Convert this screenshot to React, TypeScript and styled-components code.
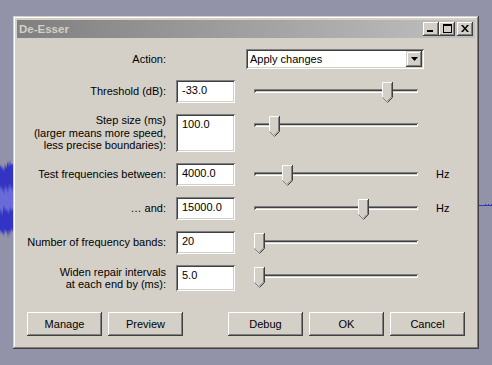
import styled, { createGlobalStyle } from "styled-components";

const GlobalStyle = createGlobalStyle`
  html, body {
    margin: 0;
    padding: 0;
    background: #9293a9;
  }
  body {
    font-family: "Liberation Sans", Arial, sans-serif;
    font-size: 11px;
    color: #000;
  }
`;

type Row = {
  label: string[];
  value: string;
  pos: number;
  height: number;
  unit?: string;
};

const rows: Row[] = [
  { label: ["Threshold (dB):"], value: "-33.0", pos: 128 / 153, height: 23 },
  {
    label: ["Step size (ms)", "(larger means more speed,", "less precise boundaries):"],
    value: "100.0",
    pos: 15 / 153,
    height: 38,
  },
  { label: ["Test frequencies between:"], value: "4000.0", pos: 28 / 153, height: 23, unit: "Hz" },
  { label: ["\u2026 and:"], value: "15000.0", pos: 104 / 153, height: 23, unit: "Hz" },
  { label: ["Number of frequency bands:"], value: "20", pos: 0, height: 23 },
  { label: ["Widen repair intervals", "at each end by (ms):"], value: "5.0", pos: 0, height: 26 },
];

const TrackArt = () => (
  <Backdrop width="492" height="365" viewBox="0 0 492 365">
    <rect x="0" y="172" width="13" height="58" fill="#6a6ad8" />
    <polygon
      fill="#3434c4"
      points="0,168 1,164 2,170 3,166 4,172 5,163 6,169 7,165 8,161 9,167 10,160 11,166 12,163 13,165 13,186 12,192 11,184 10,190 9,183 8,194 7,186 6,191 5,184 4,195 3,187 2,192 1,185 0,190"
    />
    <polygon
      fill="#3434c4"
      points="0,214 1,208 2,216 3,210 4,205 5,212 6,207 7,213 8,209 9,215 10,206 11,212 12,208 13,211 13,228 12,233 11,227 10,236 9,229 8,238 7,230 6,234 5,228 4,237 3,231 2,235 1,229 0,234"
    />
    <rect x="478" y="205" width="14" height="1" fill="#3434c4" />
    <rect x="485" y="204" width="1" height="1" fill="#3434c4" />
    <rect x="488" y="204" width="1" height="1" fill="#3434c4" />
    <rect x="491" y="204" width="1" height="1" fill="#3434c4" />
  </Backdrop>
);

const Thumb = () => (
  <ThumbSvg width="11" height="21" viewBox="0 0 11 21">
    <polygon points="0,0 11,0 11,15.5 5.5,21 0,15.5" fill="#d4d0c8" />
    <polyline points="0.5,15.5 0.5,0.5 10,0.5" fill="none" stroke="#fff" />
    <polyline points="10.5,0 10.5,15.5 5.5,20.5" fill="none" stroke="#404040" />
    <polyline points="9.5,1 9.5,15 5.5,19" fill="none" stroke="#808080" />
    <polyline points="0.5,15.5 5.5,20.5" fill="none" stroke="#808080" />
  </ThumbSvg>
);

const Slider = ({ pos }: { pos: number }) => (
  <SliderBox>
    <Track />
    <ThumbHolder style={{ left: 9 + Math.round(pos * 153) }}>
      <Thumb />
    </ThumbHolder>
  </SliderBox>
);

export default function App() {
  return (
    <>
      <GlobalStyle />
      <Desktop>
        <TrackArt />
        <Window>
          <TitleBar>
            <Title>De-Esser</Title>
            <Caption>
              <CapButton>
                <svg width="8" height="7" viewBox="0 0 8 7">
                  <rect x="0" y="5" width="6" height="2" fill="#000" />
                </svg>
              </CapButton>
              <CapButton>
                <svg width="9" height="9" viewBox="0 0 9 9">
                  <rect x="0.5" y="1" width="8" height="7.5" fill="none" stroke="#000" />
                  <rect x="0" y="0" width="9" height="2" fill="#000" />
                </svg>
              </CapButton>
              <CapButton $gap>
                <svg width="8" height="7" viewBox="0 0 8 7">
                  <path d="M0,0 L2,0 L4,2.5 L6,0 L8,0 L5,3.5 L8,7 L6,7 L4,4.5 L2,7 L0,7 L3,3.5 Z" fill="#000" />
                </svg>
              </CapButton>
            </Caption>
          </TitleBar>
          <Body>
            <Form>
              <Label>Action:</Label>
              <span />
              <Combo>
                <ComboText>Apply changes</ComboText>
                <DropButton>
                  <svg width="7" height="4" viewBox="0 0 7 4">
                    <polygon points="0,0 7,0 3.5,4" fill="#000" />
                  </svg>
                </DropButton>
              </Combo>
              <span />
              {rows.map((r) => (
                <Fragmentish key={r.value}>
                  <Label>
                    {r.label.map((l) => (
                      <div key={l}>{l}</div>
                    ))}
                  </Label>
                  <Field $h={r.height}>{r.value}</Field>
                  <Slider pos={r.pos} />
                  <Unit>{r.unit ?? ""}</Unit>
                </Fragmentish>
              ))}
            </Form>
            <Buttons>
              <Group>
                <Button>Manage</Button>
                <Button>Preview</Button>
              </Group>
              <Group>
                <Button>Debug</Button>
                <Button>OK</Button>
                <Button>Cancel</Button>
              </Group>
            </Buttons>
          </Body>
        </Window>
      </Desktop>
    </>
  );
}

const Fragmentish = styled.div`
  display: contents;
`;

const Desktop = styled.div`
  position: relative;
  width: 492px;
  height: 365px;
  overflow: hidden;
  padding: 16px 0 0 13px;
  box-sizing: border-box;
  background: #9293a9;
`;

const Backdrop = styled.svg`
  position: absolute;
  left: 0;
  top: 0;
`;

const Window = styled.div`
  position: relative;
  width: 466px;
  height: 333px;
  box-sizing: border-box;
  padding: 4px;
  background: #d4d0c8;
  box-shadow: inset -1px -1px #404040, inset 1px 1px #d4d0c8,
    inset -2px -2px #808080, inset 2px 2px #fff;
  display: flex;
  flex-direction: column;
`;

const TitleBar = styled.div`
  height: 18px;
  display: flex;
  align-items: center;
  justify-content: space-between;
  padding: 0 2px;
  background: linear-gradient(to right, #808080, #c0c0c0);
`;

const Title = styled.div`
  color: #d4d0c8;
  font-weight: bold;
  font-size: 11.5px;
`;

const Caption = styled.div`
  display: flex;
`;

const CapButton = styled.div<{ $gap?: boolean }>`
  width: 16px;
  height: 14px;
  box-sizing: border-box;
  margin-left: ${(p) => (p.$gap ? "2px" : "0")};
  background: #d4d0c8;
  box-shadow: inset -1px -1px #404040, inset 1px 1px #fff, inset -2px -2px #808080;
  display: flex;
  align-items: center;
  justify-content: center;
  padding-bottom: 1px;
`;

const Body = styled.div`
  flex: 1;
  display: flex;
  flex-direction: column;
  padding: 11px 10px 0 0;
`;

const Form = styled.div`
  display: grid;
  grid-template-columns: 149px 59px 179px auto;
  column-gap: 10px;
  row-gap: 11px;
  align-items: start;
`;

const Label = styled.div`
  align-self: center;
  text-align: right;
  line-height: 12.5px;
  white-space: nowrap;
`;

const Field = styled.div<{ $h: number }>`
  height: ${(p) => p.$h}px;
  box-sizing: border-box;
  padding: 4px 6px;
  line-height: 13px;
  background: #fff;
  box-shadow: inset 1px 1px #808080, inset -1px -1px #fff, inset 2px 2px #404040,
    inset -2px -2px #d4d0c8;
`;

const Combo = styled.div`
  margin-left: 1px;
  width: 178px;
  height: 20px;
  box-sizing: border-box;
  padding: 2px;
  display: flex;
  align-items: center;
  background: #fff;
  box-shadow: inset 1px 1px #808080, inset -1px -1px #fff, inset 2px 2px #404040,
    inset -2px -2px #d4d0c8;
`;

const ComboText = styled.div`
  flex: 1;
  padding-left: 2px;
`;

const DropButton = styled.div`
  width: 16px;
  height: 16px;
  box-sizing: border-box;
  background: #d4d0c8;
  box-shadow: inset -1px -1px #404040, inset 1px 1px #d4d0c8, inset -2px -2px #808080,
    inset 2px 2px #fff;
  display: flex;
  align-items: center;
  justify-content: center;
`;

const SliderBox = styled.div`
  position: relative;
  height: 23px;
`;

const Track = styled.div`
  position: absolute;
  left: 9px;
  top: 9px;
  width: 164px;
  height: 4px;
  box-sizing: border-box;
  background: #d4d0c8;
  box-shadow: inset 1px 1px #808080, inset -1px -1px #fff, inset 2px 2px #404040;
`;

const ThumbHolder = styled.div`
  position: absolute;
  top: 2px;
  width: 11px;
  height: 21px;
`;

const ThumbSvg = styled.svg`
  display: block;
`;

const Unit = styled.div`
  line-height: 23px;
  padding-left: 2px;
`;

const Buttons = styled.div`
  margin-top: 21px;
  padding-left: 10px;
  display: flex;
  justify-content: space-between;
`;

const Group = styled.div`
  display: flex;
  gap: 6px;
`;

const Button = styled.div`
  width: 75px;
  height: 24px;
  box-sizing: border-box;
  display: flex;
  align-items: center;
  justify-content: center;
  background: #d4d0c8;
  box-shadow: inset -1px -1px #404040, inset 1px 1px #fff, inset -2px -2px #808080;
`;
